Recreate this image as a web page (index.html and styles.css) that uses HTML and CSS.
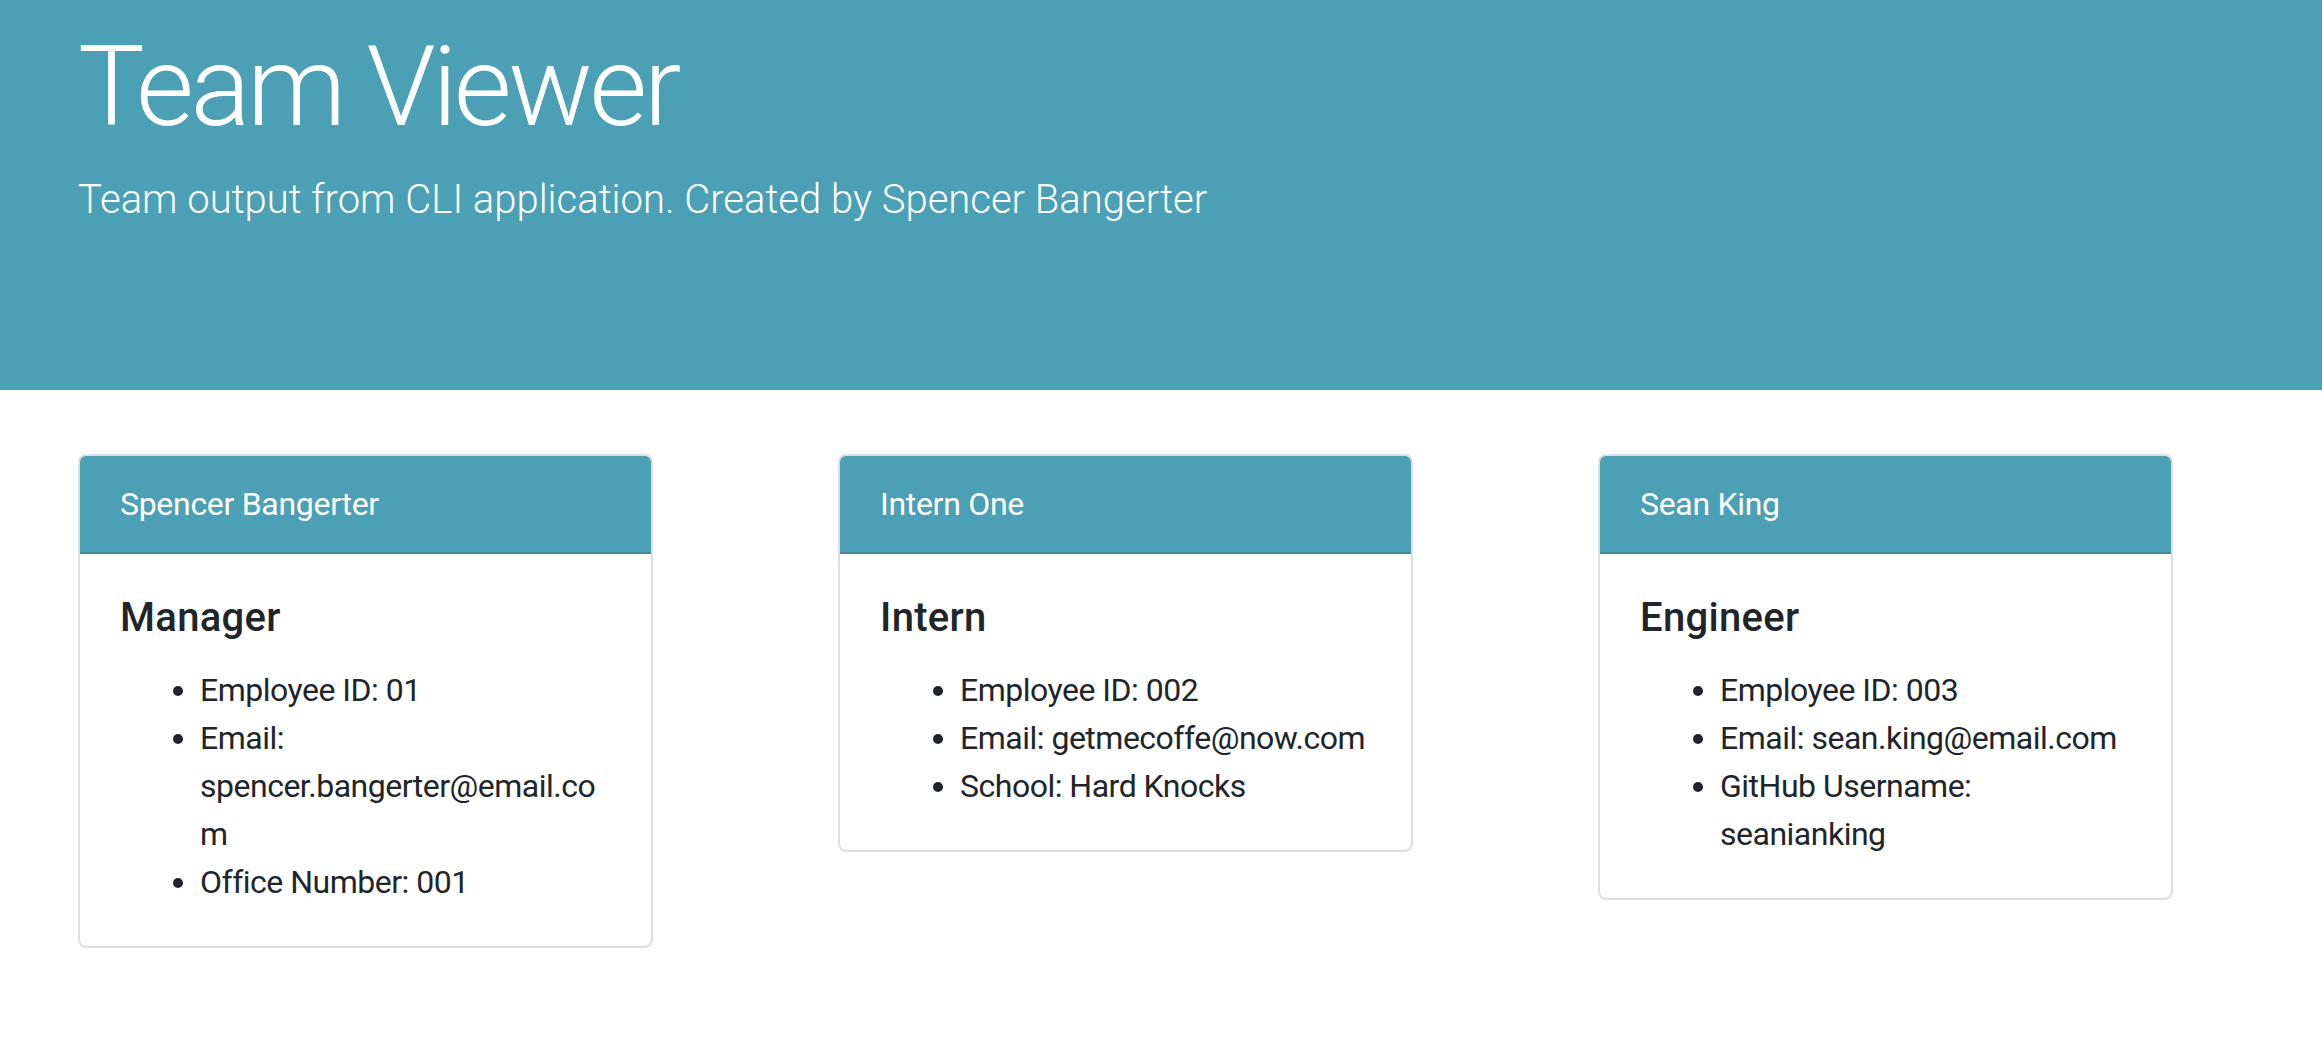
FILE: index.html
```html
<!DOCTYPE html>
<html lang="en">
<head>
<meta charset="utf-8">
<title>Team Viewer</title>
<link rel="stylesheet" href="styles.css">
</head>
<body>
<header class="jumbotron">
  <h1 class="display">Team Viewer</h1>
  <p class="lead">Team output from CLI application. Created by Spencer Bangerter</p>
</header>
<main class="team">
  <section class="card">
    <div class="card-header">Spencer Bangerter</div>
    <div class="card-body">
      <h5 class="card-title">Manager</h5>
      <ul class="card-text">
        <li>Employee ID: 01</li>
        <li>Email: spencer.bangerter@email.com</li>
        <li>Office Number: 001</li>
      </ul>
    </div>
  </section>
  <section class="card">
    <div class="card-header">Intern One</div>
    <div class="card-body">
      <h5 class="card-title">Intern</h5>
      <ul class="card-text">
        <li>Employee ID: 002</li>
        <li>Email: getmecoffe@now.com</li>
        <li>School: Hard Knocks</li>
      </ul>
    </div>
  </section>
  <section class="card">
    <div class="card-header">Sean King</div>
    <div class="card-body">
      <h5 class="card-title">Engineer</h5>
      <ul class="card-text">
        <li>Employee ID: 003</li>
        <li>Email: sean.king@email.com</li>
        <li>GitHub Username: seanianking</li>
      </ul>
    </div>
  </section>
</main>
</body>
</html>
```
FILE: styles.css
```css
* { box-sizing: border-box; }
body {
  margin: 0;
  font-family: Roboto, "Liberation Sans", sans-serif;
  color: #212529;
  background: #fff;
}
.jumbotron {
  background: #4ba0b6;
  color: #fff;
  height: 390px;
  padding: 20px 78px 0;
}
.display {
  margin: 0 0 16px;
  font-weight: 300;
  font-size: 112px;
  line-height: 134px;
  letter-spacing: -3.5px;
}
.lead {
  margin: 0;
  font-weight: 300;
  font-size: 40px;
  line-height: 60px;
}
.team {
  display: flex;
  align-items: flex-start;
  gap: 185px;
  padding: 64px 78px;
}
.card {
  width: 575px;
  border: 2px solid rgba(0,0,0,.125);
  border-radius: 8px;
  overflow: hidden;
}
.card-header {
  background: #4ba0b6;
  color: #fff;
  padding: 24px 40px;
  border-bottom: 2px solid rgba(0,0,0,.125);
  font-size: 32px;
  line-height: 48px;
  letter-spacing: -0.3px;
}
.card-body {
  padding: 40px;
}
.card-title {
  margin: 0 0 24px;
  font-size: 40px;
  line-height: 48px;
  font-weight: 500;
  letter-spacing: 0.3px;
}
.card-text {
  margin: 0;
  padding-left: 80px;
  font-size: 32px;
  line-height: 48px;
  letter-spacing: -0.5px;
  overflow-wrap: anywhere;
}
```
